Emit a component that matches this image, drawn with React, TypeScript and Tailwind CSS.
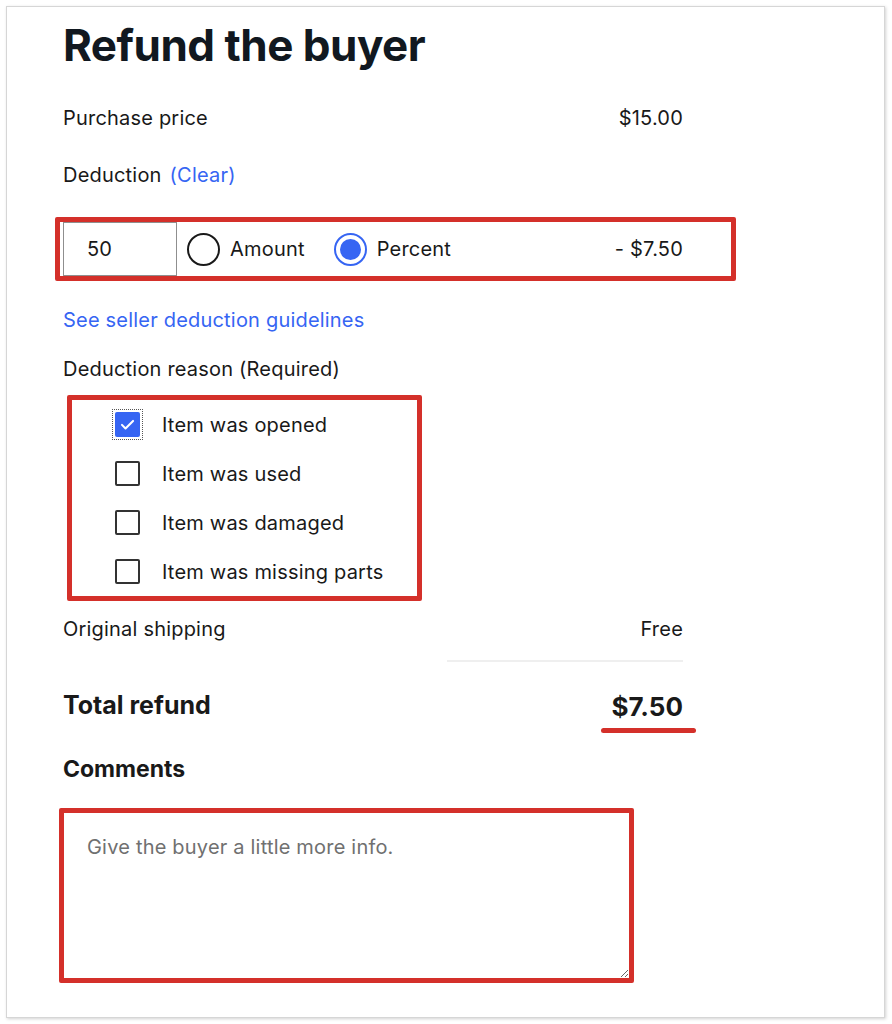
import { useState } from 'react';

const RED = 'border-[#d4302a]';

function Radio({ checked }: { checked: boolean }) {
  return checked ? (
    <span className="flex h-[33px] w-[33px] shrink-0 items-center justify-center rounded-full border-2 border-[#3665f3]">
      <span className="h-[21px] w-[21px] rounded-full bg-[#3665f3]" />
    </span>
  ) : (
    <span className="h-[33px] w-[33px] shrink-0 rounded-full border-2 border-[#191919]" />
  );
}

function Checkbox({ checked }: { checked: boolean }) {
  if (checked) {
    return (
      <span className="flex h-[31px] w-[31px] shrink-0 items-center justify-center border border-dotted border-[#555]">
        <span className="flex h-[25px] w-[25px] items-center justify-center rounded-[2px] bg-[#3665f3]">
          <svg viewBox="0 0 24 24" className="h-[19px] w-[19px]" fill="none" stroke="white" strokeWidth="2.6" strokeLinecap="round" strokeLinejoin="round">
            <path d="M5 12.5l4.5 4.5L19 7.5" />
          </svg>
        </span>
      </span>
    );
  }
  return (
    <span className="flex h-[31px] w-[31px] shrink-0 items-center justify-center">
      <span className="h-[25px] w-[25px] rounded-[2px] border-2 border-[#333]" />
    </span>
  );
}

const reasons = [
  { label: 'Item was opened', checked: true },
  { label: 'Item was used', checked: false },
  { label: 'Item was damaged', checked: false },
  { label: 'Item was missing parts', checked: false },
];

export default function App() {
  const [comment, setComment] = useState('');

  return (
    <div className="h-[1024px] w-[892px] bg-white p-[6px] font-['Inter','Liberation_Sans',sans-serif] text-[#191919]">
      <div className="h-[1012px] w-[879px] border border-[#d6d6d6] bg-white pl-[56px] shadow-[1px_1px_3px_rgba(0,0,0,0.18)]">
        <div className="w-[620px] text-[20px] tracking-[0.2px]">
          {/* Title */}
          <h1 className="mt-[10px] h-[56px] text-[44px] font-bold leading-[56px] tracking-[-0.5px] text-[#111820]">
            Refund the buyer
          </h1>

          {/* Purchase price */}
          <div className="mt-[27px] flex h-[36px] items-center justify-between">
            <span>Purchase price</span>
            <span>$15.00</span>
          </div>

          {/* Deduction */}
          <div className="mt-[21px] flex h-[36px] items-center gap-[8px]">
            <span>Deduction</span>
            <button type="button" className="text-[#3665f3]">(Clear)</button>
          </div>

          {/* Deduction input row */}
          <div className={`-ml-[8px] mt-[24px] flex h-[64px] w-[681px] items-center rounded-[2px] border-[5px] ${RED} pl-[3px] pr-[48px]`}>
            <div className="flex h-[54px] w-[114px] items-center border border-[#8f8f8f] pl-[23px]">50</div>
            <div className="ml-[10px] flex items-center gap-[10px]">
              <Radio checked={false} />
              <span>Amount</span>
            </div>
            <div className="ml-[29px] flex items-center gap-[10px]">
              <Radio checked />
              <span>Percent</span>
            </div>
            <span className="ml-auto">- $7.50</span>
          </div>

          {/* Guidelines link */}
          <div className="mt-[21px] flex h-[36px] items-center text-[#3665f3]">
            See seller deduction guidelines
          </div>

          {/* Deduction reason */}
          <div className="mt-[13px] flex h-[36px] items-center">Deduction reason (Required)</div>

          <div className={`ml-[4px] mt-[8px] w-[355px] rounded-[2px] border-[5px] ${RED} pl-[40px]`}>
            {reasons.map((r) => (
              <label key={r.label} className="flex h-[49px] items-center gap-[19px]">
                <Checkbox checked={r.checked} />
                <span>{r.label}</span>
              </label>
            ))}
          </div>

          {/* Original shipping */}
          <div className="mt-[10px] flex h-[36px] items-center justify-between">
            <span>Original shipping</span>
            <span>Free</span>
          </div>

          <div className="ml-auto mt-[13px] h-[2px] w-[236px] bg-[#efefef]" />

          {/* Total refund */}
          <div className="mt-[24px] flex h-[40px] items-center justify-between tracking-normal">
            <span className="text-[25px] font-bold">Total refund</span>
            <span className="relative text-[26px] font-bold">
              $7.50
              <span className="absolute -left-[10px] -right-[13px] top-[41px] h-[5px] rounded-full bg-[#d4302a]" />
            </span>
          </div>

          {/* Comments */}
          <div className="mt-[25px] flex h-[36px] items-center text-[23px] font-bold tracking-normal">Comments</div>

          <textarea
            value={comment}
            onChange={(e) => setComment(e.target.value)}
            placeholder="Give the buyer a little more info."
            className={`-ml-[4px] mt-[21px] block h-[175px] w-[575px] rounded-[2px] border-[5px] ${RED} px-[23px] pt-[19px] outline-none placeholder:text-[#707070]`}
          />
        </div>
      </div>
    </div>
  );
}
